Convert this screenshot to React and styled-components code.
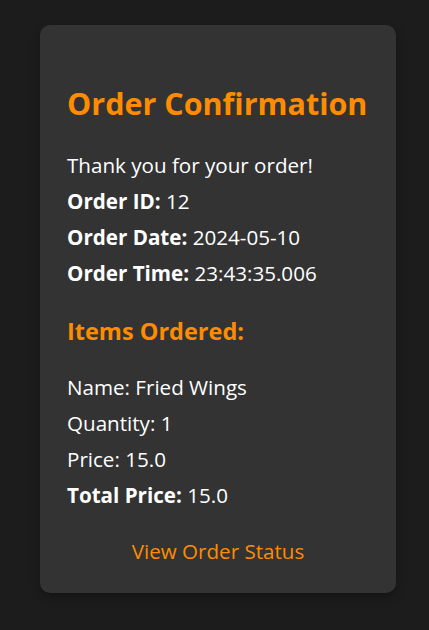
import React from 'react'
import styled, { createGlobalStyle } from 'styled-components'

const GlobalStyle = createGlobalStyle`
  html, body {
    margin: 0;
    padding: 0;
    background: #1c1c1c;
  }
  body {
    font-family: "Open Sans", "Noto Sans", sans-serif;
    color: #ffffff;
  }
`

const Page = styled.div`
  min-height: 630px;
  padding: 25px 33px 38px 40px;
  box-sizing: border-box;
`

const Card = styled.div`
  width: 356px;
  background: #333333;
  border-radius: 10px;
  padding: 58px 27px 24px 27px;
  box-sizing: border-box;
  box-shadow: 0 4px 10px rgba(0, 0, 0, 0.3);
`

const Title = styled.h1`
  margin: 0 0 24px 0;
  font-size: 30.5px;
  line-height: 40px;
  font-weight: 700;
  color: #ff8c00;
  white-space: nowrap;
`

const Line = styled.p`
  margin: 0;
  font-size: 20.6px;
  line-height: 36px;
  color: #ffffff;
`

const Label = styled.strong`
  font-weight: 700;
`

const SubTitle = styled.h2`
  margin: 20px 0 18px 0;
  font-size: 23.5px;
  line-height: 40px;
  font-weight: 700;
  color: #ff8c00;
`

const StatusLink = styled.a`
  display: block;
  margin-top: 20px;
  text-align: center;
  font-size: 20.6px;
  line-height: 36px;
  color: #ff8c00;
  text-decoration: none;
`

function App() {
  return (
    <Page>
      <GlobalStyle />
      <Card>
        <Title>Order Confirmation</Title>
        <Line>Thank you for your order!</Line>
        <Line><Label>Order ID:</Label> 12</Line>
        <Line><Label>Order Date:</Label> 2024-05-10</Line>
        <Line><Label>Order Time:</Label> 23:43:35.006</Line>
        <SubTitle>Items Ordered:</SubTitle>
        <Line>Name: Fried Wings</Line>
        <Line>Quantity: 1</Line>
        <Line>Price: 15.0</Line>
        <Line><Label>Total Price:</Label> 15.0</Line>
        <StatusLink href="#">View Order Status</StatusLink>
      </Card>
    </Page>
  )
}

export default App
